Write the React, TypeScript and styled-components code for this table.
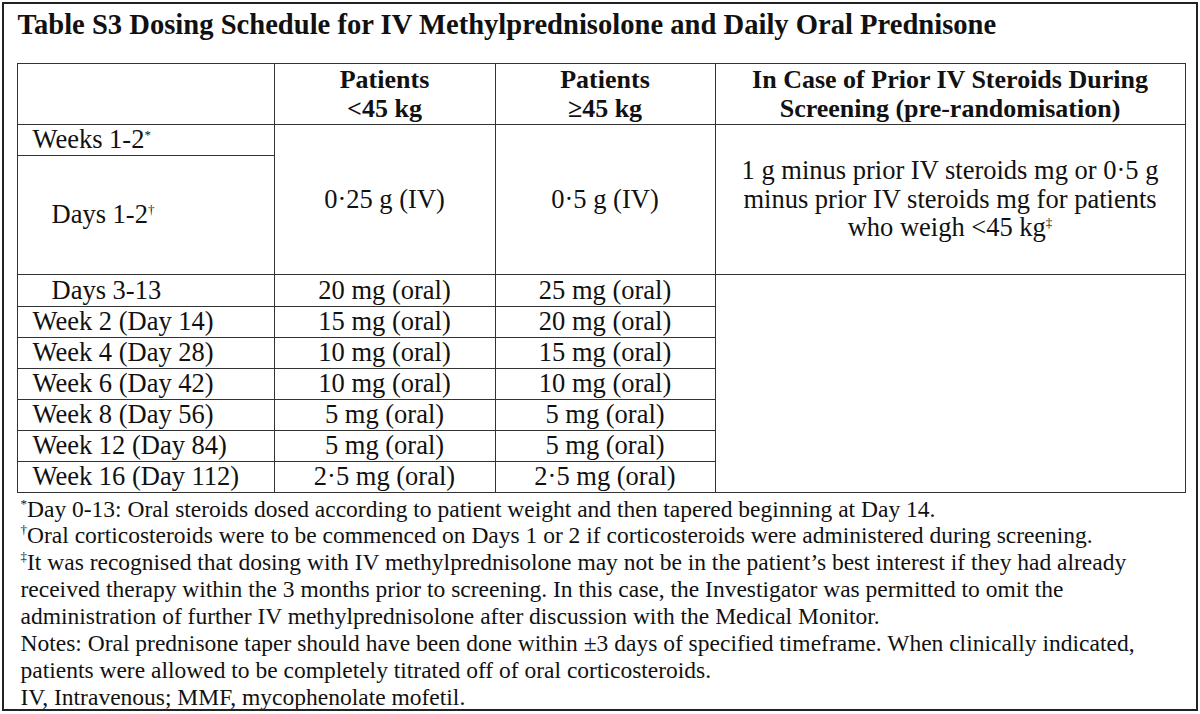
import React from "react";
import styled, { createGlobalStyle } from "styled-components";

const Global = createGlobalStyle`
  html, body { margin: 0; padding: 0; background: #fff; }
  body { font-family: "Liberation Serif", "Times New Roman", serif; color: #111; }
`;

const Frame = styled.div`
  box-sizing: border-box;
  margin: 2px;
  width: 1196px;
  height: 709px;
  border: 2.5px solid #222;
  padding: 0 0 0 12.5px;
  overflow: hidden;
  font-family: "Liberation Serif", "Times New Roman", serif;
`;

const Title = styled.h1`
  margin: 0;
  padding: 5px 0 0 1px;
  height: 58.5px;
  box-sizing: border-box;
  font-size: 28.6px;
  font-weight: bold;
  line-height: 32px;
  white-space: nowrap;
`;

const Table = styled.table`
  border-collapse: collapse;
  table-layout: fixed;
  width: 1168px;
  font-size: 26.5px;
`;

const Col = styled.col<{ $w?: number }>`
  ${(p) => (p.$w ? `width: ${p.$w}px;` : "")}
`;

const Th = styled.th`
  border: 1.5px solid #333;
  font-weight: bold;
  font-size: 26px;
  text-align: center;
  vertical-align: middle;
  padding: 0;
  line-height: 29px;
  height: 60px;
  white-space: nowrap;
`;

const Td = styled.td<{ $indent?: boolean; $center?: boolean; $h?: number }>`
  border: 1.5px solid #333;
  padding: 0 0 0 ${(p) => (p.$center ? 0 : p.$indent ? 34 : 15)}px;
  text-align: ${(p) => (p.$center ? "center" : "left")};
  vertical-align: middle;
  line-height: 28.5px;
  height: ${(p) => p.$h ?? 30}px;
  white-space: nowrap;
`;

const Sup = styled.sup`
  font-size: 13px;
  vertical-align: 9px;
  line-height: 0;
`;

const Notes = styled.div`
  padding: 3px 0 0 4px;
  font-size: 23.5px;
  line-height: 26.9px;
  white-space: nowrap;
`;

const Note = styled.p`
  margin: 0;
`;

const rows: [string, string, string][] = [
  ["Week 2 (Day 14)", "15 mg (oral)", "20 mg (oral)"],
  ["Week 4 (Day 28)", "10 mg (oral)", "15 mg (oral)"],
  ["Week 6 (Day 42)", "10 mg (oral)", "10 mg (oral)"],
  ["Week 8 (Day 56)", "5 mg (oral)", "5 mg (oral)"],
  ["Week 12 (Day 84)", "5 mg (oral)", "5 mg (oral)"],
  ["Week 16 (Day 112)", "2·5 mg (oral)", "2·5 mg (oral)"],
];

export default function App() {
  return (
    <>
      <Global />
      <Frame>
        <Title>Table S3 Dosing Schedule for IV Methylprednisolone and Daily Oral Prednisone</Title>
        <Table>
          <colgroup>
            <Col $w={257} />
            <Col $w={221} />
            <Col $w={220} />
            <Col $w={470} />
          </colgroup>
          <thead>
            <tr>
              <Th />
              <Th>
                Patients
                <br />
                &lt;45 kg
              </Th>
              <Th>
                Patients
                <br />
                ≥45 kg
              </Th>
              <Th>
                In Case of Prior IV Steroids During
                <br />
                Screening (pre-randomisation)
              </Th>
            </tr>
          </thead>
          <tbody>
            <tr>
              <Td $h={30}>
                Weeks 1-2<Sup>*</Sup>
              </Td>
              <Td $center rowSpan={2}>
                0·25 g (IV)
              </Td>
              <Td $center rowSpan={2}>
                0·5 g (IV)
              </Td>
              <Td $center rowSpan={2}>
                1 g minus prior IV steroids mg or 0·5 g
                <br />
                minus prior IV steroids mg for patients
                <br />
                who weigh &lt;45 kg<Sup>‡</Sup>
              </Td>
            </tr>
            <tr>
              <Td $indent $h={118}>
                Days 1-2<Sup>†</Sup>
              </Td>
            </tr>
            <tr>
              <Td $indent $h={31}>
                Days 3-13
              </Td>
              <Td $center>20 mg (oral)</Td>
              <Td $center>25 mg (oral)</Td>
              <Td rowSpan={7} />
            </tr>
            {rows.map(([a, b, c]) => (
              <tr key={a}>
                <Td>{a}</Td>
                <Td $center>{b}</Td>
                <Td $center>{c}</Td>
              </tr>
            ))}
          </tbody>
        </Table>
        <Notes>
          <Note>
            <Sup>*</Sup>Day 0-13: Oral steroids dosed according to patient weight and then tapered beginning at Day 14.
          </Note>
          <Note>
            <Sup>†</Sup>Oral corticosteroids were to be commenced on Days 1 or 2 if corticosteroids were administered during screening.
          </Note>
          <Note>
            <Sup>‡</Sup>It was recognised that dosing with IV methylprednisolone may not be in the patient’s best interest if they had already
            <br />
            received therapy within the 3 months prior to screening. In this case, the Investigator was permitted to omit the
            <br />
            administration of further IV methylprednisolone after discussion with the Medical Monitor.
          </Note>
          <Note>
            Notes: Oral prednisone taper should have been done within ±3 days of specified timeframe. When clinically indicated,
            <br />
            patients were allowed to be completely titrated off of oral corticosteroids.
          </Note>
          <Note>IV, Intravenous; MMF, mycophenolate mofetil.</Note>
        </Notes>
      </Frame>
    </>
  );
}
